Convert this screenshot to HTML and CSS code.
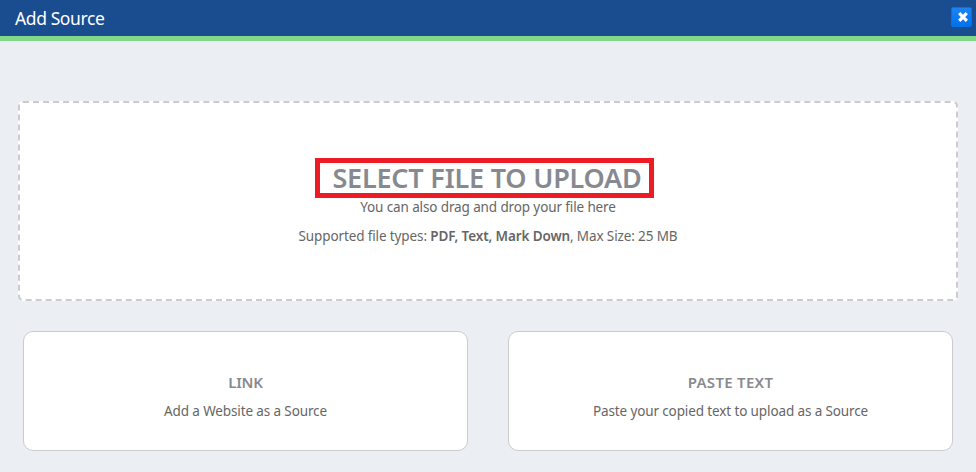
FILE: index.html
```html
<!DOCTYPE html>
<html lang="en">
<head>
  <meta charset="UTF-8" />
  <meta name="viewport" content="width=device-width, initial-scale=1" />
  <title>Add Source</title>
  <link rel="stylesheet" href="styles.css">
</head>
<body>
  <header class="modal-header">
    <h1>Add Source</h1>
    <button type="button" class="close-button" aria-label="Close">
      <svg width="12" height="12" viewBox="0 0 12 12" fill="none" stroke="currentColor" stroke-width="3.2"><path d="M2.2 2.2l7.6 7.6M9.8 2.2l-7.6 7.6"></path></svg>
    </button>
  </header>

  <main class="modal-body">
    <section class="drop-zone">
      <h2 class="select-file">SELECT FILE TO UPLOAD</h2>
      <p class="drop-hint">You can also drag and drop your file here</p>
      <p class="file-types">Supported file types: <b>PDF, Text, Mark Down</b>, Max Size: 25 MB</p>
    </section>

    <div class="source-options">
      <section class="source-card">
        <h3>LINK</h3>
        <p>Add a Website as a Source</p>
      </section>
      <section class="source-card">
        <h3 class="paste-title">PASTE TEXT</h3>
        <p>Paste your copied text to upload as a Source</p>
      </section>
    </div>
  </main>
</body>
</html>
```
FILE: styles.css
```css
* {
  box-sizing: border-box;
}
body {
  margin: 0;
  min-height: 100vh;
  background-color: #ebeef3;
  font-family: "Segoe UI", "Noto Sans", sans-serif;
  font-size: 13.5px;
  letter-spacing: -0.12px;
  color: #666;
}
h1, h2, h3, p {
  margin: 0;
}
.modal-header {
  display: flex;
  justify-content: space-between;
  align-items: flex-start;
  height: 41px;
  padding: 7px 4px 0 15px;
  background-color: #1a4d90;
  border-bottom: 5px solid #81d886;
  color: #fff;
}
.modal-header h1 {
  font-size: 17.5px;
  font-weight: 400;
  line-height: 22px;
  letter-spacing: -0.4px;
}
.close-button {
  display: flex;
  justify-content: center;
  align-items: center;
  width: 21px;
  height: 20px;
  padding: 0 0 0 2px;
  border: 1px solid #0870e4;
  border-radius: 2px;
  background: linear-gradient(#1c84f2, #0072ee);
  color: #fff;
  cursor: pointer;
}
.modal-body {
  padding: 60px 18px 21px;
}
.drop-zone {
  display: flex;
  flex-direction: column;
  align-items: center;
  width: 940px;
  height: 200px;
  padding-top: 55px;
  border: 2px dashed #ccc;
  border-radius: 5px;
  background-color: #fff;
}
.select-file {
  display: flex;
  justify-content: center;
  width: 339px;
  height: 40px;
  margin-right: 7px;
  padding-left: 5px;
  border: 5px solid #ed1c24;
  color: #868a90;
  font-size: 27px;
  font-weight: 600;
  line-height: 30px;
  letter-spacing: -0.2px;
  white-space: nowrap;
}
.drop-hint {
  line-height: 19px;
}
.file-types {
  margin-top: 10px;
  line-height: 19px;
}
.file-types b {
  font-weight: 600;
}
.source-options {
  display: flex;
  gap: 40px;
  padding: 30px 5px 0;
}
.source-card {
  width: 445px;
  height: 120px;
  padding-top: 40px;
  border: 1px solid #ccc;
  border-radius: 10px;
  background-color: #fff;
  text-align: center;
}
.source-card h3 {
  color: #868a90;
  font-size: 15px;
  font-weight: 600;
  line-height: 20px;
  letter-spacing: -0.2px;
}
.source-card .paste-title {
  letter-spacing: 0.3px;
}
.source-card p {
  margin-top: 10px;
  line-height: 19px;
}
```
